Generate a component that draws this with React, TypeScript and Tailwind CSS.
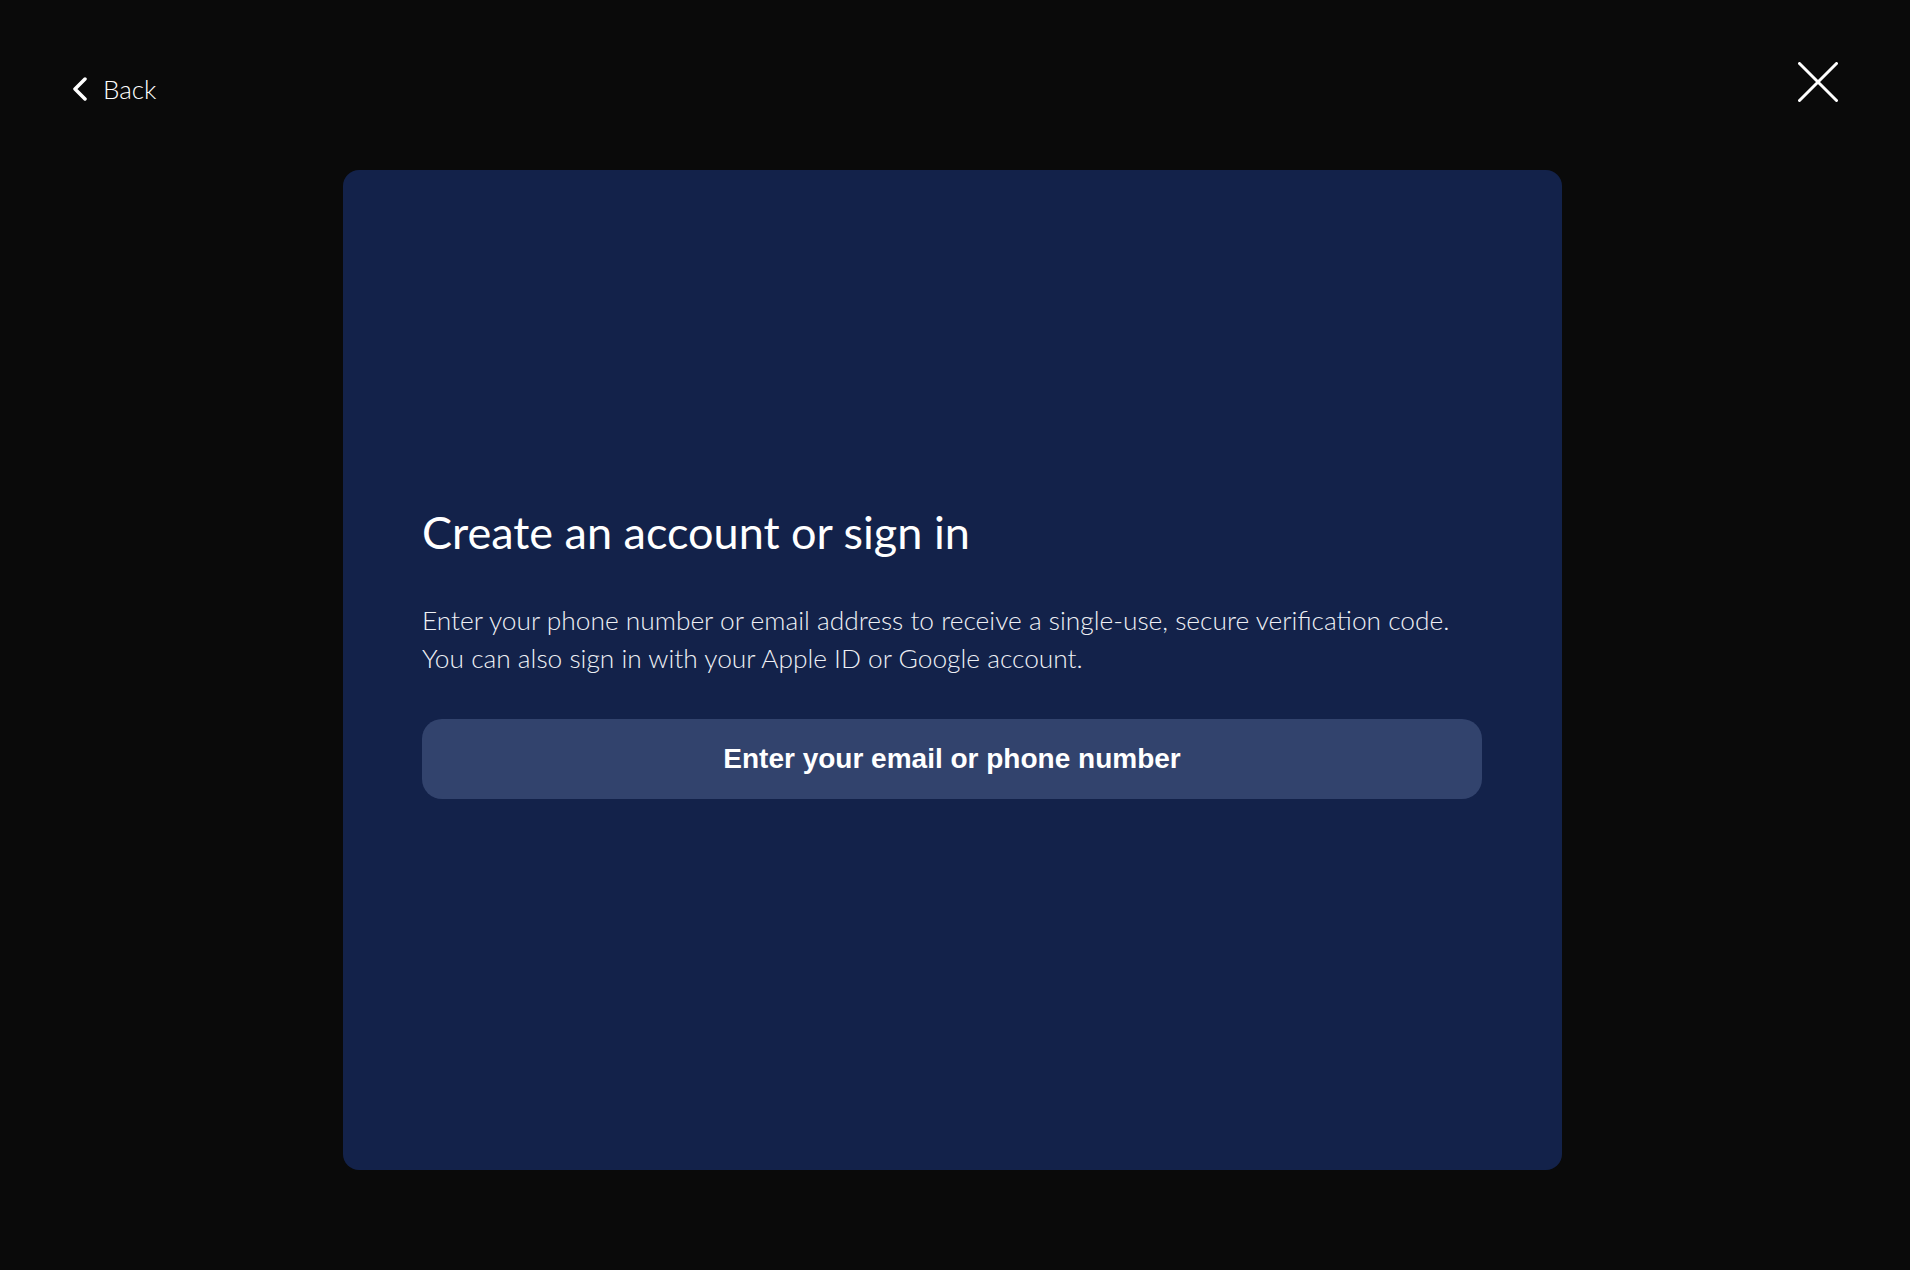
export default function App() {
  return (
    <div className="min-h-screen w-full bg-[#0a0a0a] text-white flex flex-col" style={{ fontFamily: "Lato, 'Noto Sans', sans-serif" }}>
      {/* Top bar */}
      <div className="h-[170px] flex items-start justify-between pl-[72px] pr-[72px] pt-[62px]">
        <button className="flex items-center gap-[15px] text-[26px] font-light text-white leading-none mt-[14px]">
          <svg viewBox="0 0 16 24" className="w-[16px] h-[24px]" fill="none" stroke="white" strokeWidth="3.5" strokeLinecap="round" strokeLinejoin="round">
            <path d="M13 2 L3 12 L13 22" />
          </svg>
          <span>Back</span>
        </button>
        <button className="w-[40px] h-[40px]" aria-label="Close">
          <svg viewBox="0 0 40 40" className="w-[40px] h-[40px]" fill="none" stroke="white" strokeWidth="3" strokeLinecap="round">
            <path d="M1.5 1.5 L38.5 38.5 M38.5 1.5 L1.5 38.5" />
          </svg>
        </button>
      </div>

      {/* Card */}
      <div className="flex justify-center pr-[5px]">
        <div className="w-[1219px] h-[1000px] rounded-[16px] bg-[#13224a] pl-[79px] pr-[80px] flex flex-col justify-center pb-[32px]">
          <h1 className="text-[45px] font-normal leading-none">Create an account or sign in</h1>
          <p className="mt-[46px] text-[26.3px] font-light leading-[38px] text-[#eef0f5]">
            Enter your phone number or email address to receive a single-use, secure verification code.
            <br />
            You can also sign in with your Apple ID or Google account.
          </p>
          <button className="mt-[42px] h-[80px] w-full rounded-[20px] bg-[#32436d] text-[28px] font-bold text-white" style={{ fontFamily: "'Liberation Sans', Arial, sans-serif" }}>
            Enter your email or phone number
          </button>
        </div>
      </div>
    </div>
  );
}
